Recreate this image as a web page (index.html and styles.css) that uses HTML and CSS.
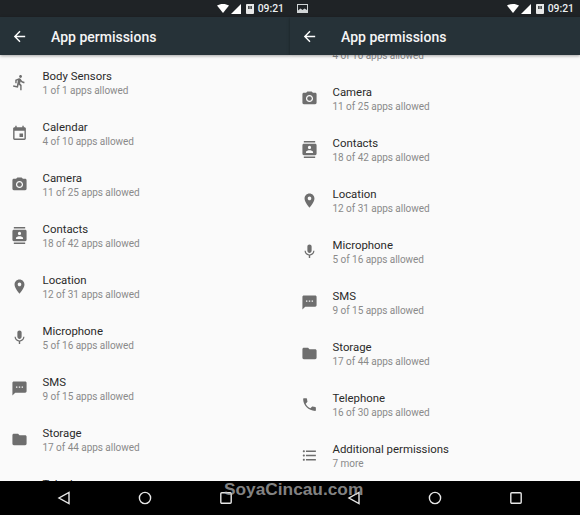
FILE: index.html
```html
<!DOCTYPE html>
<html lang="en">
<head>
  <meta charset="UTF-8" />
  <title>App permissions</title>
  <link rel="stylesheet" href="styles.css">
</head>
<body>
  <svg class="defs" width="0" height="0">
    <symbol id="i-run" viewBox="0 0 24 24"><path d="M13.49 5.48c1.1 0 2-.9 2-2s-.9-2-2-2-2 .9-2 2 .9 2 2 2zm-3.6 13.9l1-4.4 2.1 2v6h2v-7.5l-2.1-2 .6-3c1.3 1.5 3.3 2.5 5.5 2.5v-2c-1.9 0-3.5-1-4.3-2.4l-1-1.6c-.4-.6-1-1-1.7-1-.3 0-.5.1-.8.1l-5.2 2.2v4.7h2v-3.4l1.8-.7-1.6 8.1-4.9-1-.4 2 7 1.4z"/></symbol>
    <symbol id="i-event" viewBox="0 0 24 24"><path d="M17 12h-5v5h5v-5zM16 1v2H8V1H6v2H5c-1.11 0-1.99.9-1.99 2L3 19c0 1.1.89 2 2 2h14c1.1 0 2-.9 2-2V5c0-1.1-.9-2-2-2h-1V1h-2zm3 18H5V8h14v11z"/></symbol>
    <symbol id="i-camera" viewBox="0 0 24 24"><circle cx="12" cy="12" r="3.2"/><path d="M9 2L7.17 4H4c-1.1 0-2 .9-2 2v12c0 1.1.9 2 2 2h16c1.1 0 2-.9 2-2V6c0-1.1-.9-2-2-2h-3.17L15 2H9zm3 15c-2.76 0-5-2.24-5-5s2.24-5 5-5 5 2.24 5 5-2.24 5-5 5z"/></symbol>
    <symbol id="i-contacts" viewBox="0 0 24 24"><path d="M20 0H4v2h16V0zM4 24h16v-2H4v2zM20 4H4c-1.1 0-2 .9-2 2v12c0 1.1.9 2 2 2h16c1.1 0 2-.9 2-2V6c0-1.1-.9-2-2-2zm-8 2.75c1.24 0 2.25 1.01 2.25 2.25s-1.01 2.25-2.25 2.25S9.75 10.24 9.75 9 10.76 6.75 12 6.75zM17 17H7v-1.5c0-1.67 3.33-2.5 5-2.5s5 .83 5 2.5V17z"/></symbol>
    <symbol id="i-place" viewBox="0 0 24 24"><path d="M12 2C8.13 2 5 5.13 5 9c0 5.25 7 13 7 13s7-7.75 7-13c0-3.87-3.13-7-7-7zm0 9.5c-1.38 0-2.5-1.12-2.5-2.5s1.12-2.5 2.5-2.5 2.5 1.12 2.5 2.5-1.12 2.5-2.5 2.5z"/></symbol>
    <symbol id="i-mic" viewBox="0 0 24 24"><path d="M12 14c1.66 0 2.99-1.34 2.99-3L15 5c0-1.66-1.34-3-3-3S9 3.34 9 5v6c0 1.66 1.34 3 3 3zm5.3-3c0 3-2.54 5.1-5.3 5.1S6.7 14 6.7 11H5c0 3.41 2.72 6.23 6 6.72V21h2v-3.28c3.28-.48 6-3.3 6-6.72h-1.7z"/></symbol>
    <symbol id="i-sms" viewBox="0 0 24 24"><path d="M20 2H4c-1.1 0-1.99.9-1.99 2L2 22l4-4h14c1.1 0 2-.9 2-2V4c0-1.1-.9-2-2-2zM9 11H7V9h2v2zm4 0h-2V9h2v2zm4 0h-2V9h2v2z"/></symbol>
    <symbol id="i-folder" viewBox="0 0 24 24"><path d="M10 4H4c-1.1 0-1.99.9-1.99 2L2 18c0 1.1.9 2 2 2h16c1.1 0 2-.9 2-2V8c0-1.1-.9-2-2-2h-8l-2-2z"/></symbol>
    <symbol id="i-phone" viewBox="0 0 24 24"><path d="M6.62 10.79c1.44 2.83 3.76 5.14 6.59 6.59l2.2-2.2c.27-.27.67-.36 1.02-.24 1.12.37 2.33.57 3.57.57.55 0 1 .45 1 1V20c0 .55-.45 1-1 1-9.39 0-17-7.61-17-17 0-.55.45-1 1-1h3.5c.55 0 1 .45 1 1 0 1.25.2 2.45.57 3.57.11.35.03.74-.25 1.02l-2.2 2.2z"/></symbol>
    <symbol id="i-list" viewBox="0 0 24 24"><path d="M4 10.5c-.83 0-1.5.67-1.5 1.5s.67 1.5 1.5 1.5 1.5-.67 1.5-1.5-.67-1.5-1.5-1.5zm0-6c-.83 0-1.5.67-1.5 1.5S3.17 7.5 4 7.5 5.5 6.83 5.5 6 4.83 4.5 4 4.5zm0 12c-.83 0-1.5.68-1.5 1.5s.68 1.5 1.5 1.5 1.5-.68 1.5-1.5-.67-1.5-1.5-1.5zM7 19h14v-2H7v2zm0-6h14v-2H7v2zm0-8v2h14V5H7z"/></symbol>
    <symbol id="i-back" viewBox="0 0 24 24"><path d="M20 11H7.83l5.59-5.59L12 4l-8 8 8 8 1.41-1.41L7.83 13H20v-2z"/></symbol>
    <symbol id="s-wifi" viewBox="0 0 12 9"><path d="M0 1.6C1.7.6 3.700 0 6 0s4.300.6 6 1.600L6 9z"/></symbol>
    <symbol id="s-signal" viewBox="0 0 10 10"><path d="M10 0v10H0z"/></symbol>
    <symbol id="s-sim" viewBox="0 0 9 11"><path fill-rule="evenodd" d="M1 0h5l3 0v10a1 1 0 0 1-1 1H1a1 1 0 0 1-1-1V1a1 1 0 0 1 1-1zm1.500 2v3.500h1.500V2zm2.500 0v3.500h1.500V2z"/></symbol>
    <symbol id="s-pic" viewBox="0 0 11 9"><path fill-rule="evenodd" d="M0 0h11v9H0zm1 1v5.500l2.500-2 2 1.500 2-1.500L10 6V1z"/></symbol>
  </svg>

  <div class="phones">
    <!-- left screen, list at the top -->
    <div class="phone">
      <div class="status">
        <div class="status-right">
          <svg class="s-wifi"><use href="#s-wifi"/></svg>
          <svg class="s-signal"><use href="#s-signal"/></svg>
          <svg class="s-sim"><use href="#s-sim"/></svg>
          <span class="clock">09:21</span>
        </div>
      </div>
      <div class="appbar">
        <svg class="back"><use href="#i-back"/></svg>
        <span class="appbar-title">App permissions</span>
      </div>
      <div class="screen">
        <div class="list">
          <div class="row"><svg class="ico"><use href="#i-run"/></svg><div><div class="name">Body Sensors</div><div class="sub">1 of 1 apps allowed</div></div></div>
          <div class="row"><svg class="ico"><use href="#i-event"/></svg><div><div class="name">Calendar</div><div class="sub">4 of 10 apps allowed</div></div></div>
          <div class="row"><svg class="ico"><use href="#i-camera"/></svg><div><div class="name">Camera</div><div class="sub">11 of 25 apps allowed</div></div></div>
          <div class="row"><svg class="ico"><use href="#i-contacts"/></svg><div><div class="name">Contacts</div><div class="sub">18 of 42 apps allowed</div></div></div>
          <div class="row"><svg class="ico"><use href="#i-place"/></svg><div><div class="name">Location</div><div class="sub">12 of 31 apps allowed</div></div></div>
          <div class="row"><svg class="ico"><use href="#i-mic"/></svg><div><div class="name">Microphone</div><div class="sub">5 of 16 apps allowed</div></div></div>
          <div class="row"><svg class="ico"><use href="#i-sms"/></svg><div><div class="name">SMS</div><div class="sub">9 of 15 apps allowed</div></div></div>
          <div class="row"><svg class="ico"><use href="#i-folder"/></svg><div><div class="name">Storage</div><div class="sub">17 of 44 apps allowed</div></div></div>
          <div class="row"><svg class="ico"><use href="#i-phone"/></svg><div><div class="name">Telephone</div><div class="sub">16 of 30 apps allowed</div></div></div>
        </div>
      </div>
      <div class="navbar">
        <svg class="nav-ico" viewBox="0 0 14 14"><path d="M12 1.500v11L2 7z"/></svg>
        <svg class="nav-ico" viewBox="0 0 14 14"><circle cx="7" cy="7" r="5.600"/></svg>
        <svg class="nav-ico" viewBox="0 0 14 14"><rect x="1.800" y="1.800" width="10.400" height="10.400" rx="1"/></svg>
      </div>
    </div>

    <!-- right screen, scrolled to the bottom -->
    <div class="phone">
      <div class="status">
        <svg class="s-pic"><use href="#s-pic"/></svg>
        <div class="status-right">
          <svg class="s-wifi"><use href="#s-wifi"/></svg>
          <svg class="s-signal"><use href="#s-signal"/></svg>
          <svg class="s-sim"><use href="#s-sim"/></svg>
          <span class="clock">09:21</span>
        </div>
      </div>
      <div class="appbar">
        <svg class="back"><use href="#i-back"/></svg>
        <span class="appbar-title">App permissions</span>
      </div>
      <div class="screen">
        <div class="list list-scrolled">
          <div class="row"><svg class="ico"><use href="#i-event"/></svg><div><div class="name">Calendar</div><div class="sub">4 of 10 apps allowed</div></div></div>
          <div class="row"><svg class="ico"><use href="#i-camera"/></svg><div><div class="name">Camera</div><div class="sub">11 of 25 apps allowed</div></div></div>
          <div class="row"><svg class="ico"><use href="#i-contacts"/></svg><div><div class="name">Contacts</div><div class="sub">18 of 42 apps allowed</div></div></div>
          <div class="row"><svg class="ico"><use href="#i-place"/></svg><div><div class="name">Location</div><div class="sub">12 of 31 apps allowed</div></div></div>
          <div class="row"><svg class="ico"><use href="#i-mic"/></svg><div><div class="name">Microphone</div><div class="sub">5 of 16 apps allowed</div></div></div>
          <div class="row"><svg class="ico"><use href="#i-sms"/></svg><div><div class="name">SMS</div><div class="sub">9 of 15 apps allowed</div></div></div>
          <div class="row"><svg class="ico"><use href="#i-folder"/></svg><div><div class="name">Storage</div><div class="sub">17 of 44 apps allowed</div></div></div>
          <div class="row"><svg class="ico"><use href="#i-phone"/></svg><div><div class="name">Telephone</div><div class="sub">16 of 30 apps allowed</div></div></div>
          <div class="row"><svg class="ico"><use href="#i-list"/></svg><div><div class="name">Additional permissions</div><div class="sub">7 more</div></div></div>
        </div>
      </div>
      <div class="navbar">
        <svg class="nav-ico" viewBox="0 0 14 14"><path d="M12 1.500v11L2 7z"/></svg>
        <svg class="nav-ico" viewBox="0 0 14 14"><circle cx="7" cy="7" r="5.600"/></svg>
        <svg class="nav-ico" viewBox="0 0 14 14"><rect x="1.800" y="1.800" width="10.400" height="10.400" rx="1"/></svg>
      </div>
    </div>
  </div>

  <div class="watermark">SoyaCincau.com</div>
</body>
</html>
```

FILE: styles.css
```css
html, body { margin: 0; padding: 0; }
body { width: 580px; height: 515px; overflow: hidden; position: relative; font-family: Roboto, sans-serif; background: #000; }
.defs { position: absolute; }

.phones { display: flex; height: 515px; }
.phone { width: 290px; display: flex; flex-direction: column; height: 515px; }

.status {
  height: 17px;
  background: #1f2326;
  display: flex;
  align-items: center;
  padding: 0 6px 0 7px;
  color: #fff;
}
.status-right { margin-left: auto; display: flex; align-items: center; }
.s-wifi { width: 12px; height: 9px; fill: #fff; margin-right: 2px; }
.s-signal { width: 10px; height: 10px; fill: #fff; margin-right: 5px; }
.s-sim { width: 8px; height: 10px; fill: #e8e8e8; margin-right: 4px; }
.s-pic { width: 11px; height: 9px; fill: #d0d4d6; }
.clock { font-size: 10.4px; font-weight: 500; color: #eceff1; }

.appbar {
  height: 38px;
  background: #263238;
  display: flex;
  align-items: center;
  color: #fff;
  position: relative;
  z-index: 1;
  box-shadow: 0 1px 3px rgba(0,0,0,0.35);
}
.back { width: 17px; height: 17px; fill: #fff; margin-left: 11px; }
.appbar-title { margin-left: 23px; padding-top: 2px; font-size: 14px; font-weight: 500; color: #f5f5f5; }

.screen { flex: 1; background: #fafafa; overflow: hidden; }
.list { padding-top: 2px; }
.list-scrolled { padding-top: 0; margin-top: -33px; }

.row { height: 51px; display: flex; align-items: center; }
.ico { width: 17px; height: 17px; fill: #6e6e6e; margin: 0 14.5px 0 11px; flex: none; }
.row > div { padding-top: 1px; }
.name { font-size: 11.4px; color: #2a2a2a; line-height: 14px; }
.sub { font-size: 10px; letter-spacing: -0.04px; color: #8a8a8a; line-height: 14px; margin-top: 1px; }

.navbar {
  height: 34px;
  background: #000;
  display: flex;
  align-items: center;
  padding-left: 57px;
  gap: 67px;
}
.nav-ico { width: 14px; height: 14px; fill: none; stroke: #e6e6e6; stroke-width: 1.4; }

.watermark {
  position: absolute;
  left: 224px;
  top: 479px;
  font-family: "Liberation Sans", Arial, sans-serif;
  font-weight: bold;
  font-size: 17.3px;
  color: rgba(190,190,190,0.7);
}
```
